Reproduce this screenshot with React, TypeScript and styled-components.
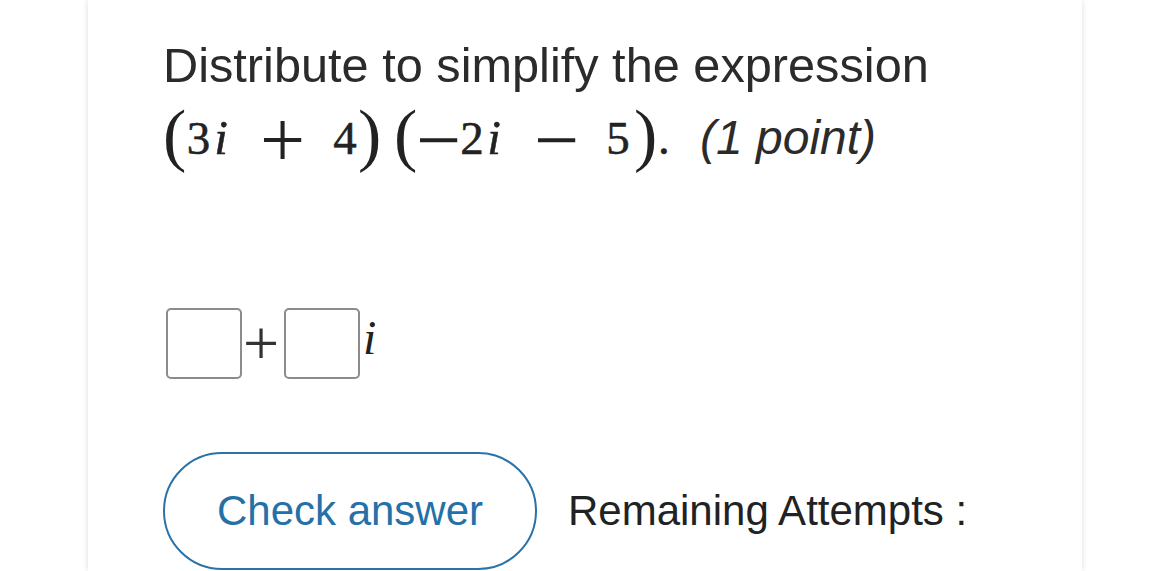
import React from "react";
import styled, { createGlobalStyle, css } from "styled-components";

const GlobalStyle = createGlobalStyle`
  html, body {
    margin: 0;
    padding: 0;
    background: #ffffff;
  }
  body {
    font-family: "Liberation Sans", Arial, sans-serif;
    color: #2b2b2b;
  }
`;

type Kind = "paren" | "num" | "var" | "op";

interface Token {
  text: string;
  kind: Kind;
  width: number;
  gap: number;
}

// (3i + 4)(−2i − 5).
const expression: Token[] = [
  { text: "(", kind: "paren", width: 22, gap: 0 },
  { text: "3", kind: "num", width: 27, gap: 0 },
  { text: "i", kind: "var", width: 18, gap: 0 },
  { text: "+", kind: "op", width: 44, gap: 30 },
  { text: "4", kind: "num", width: 26, gap: 28 },
  { text: ")", kind: "paren", width: 21, gap: 0 },
  { text: "(", kind: "paren", width: 20, gap: 15 },
  { text: "−", kind: "op", width: 40, gap: 2 },
  { text: "2", kind: "num", width: 24, gap: 4 },
  { text: "i", kind: "var", width: 18, gap: 1 },
  { text: "−", kind: "op", width: 40, gap: 31 },
  { text: "5", kind: "num", width: 24, gap: 32 },
  { text: ")", kind: "paren", width: 20, gap: 4 },
  { text: ".", kind: "num", width: 10, gap: 4 },
];

export default function App() {
  return (
    <>
      <GlobalStyle />
      <Page>
        <Card>
          <Prompt>Distribute to simplify the expression</Prompt>
          <MathLine>
            {expression.map((tok, i) => (
              <Glyph key={i} $kind={tok.kind} $width={tok.width} $gap={tok.gap}>
                {tok.text}
              </Glyph>
            ))}
            <Points>(1 point)</Points>
          </MathLine>

          <AnswerRow>
            <Blank aria-label="real part" />
            <Plus>+</Plus>
            <Blank aria-label="imaginary part" />
            <Unit>i</Unit>
          </AnswerRow>

          <Footer>
            <CheckButton>Check answer</CheckButton>
            <Attempts>Remaining Attempts :</Attempts>
          </Footer>
        </Card>
      </Page>
    </>
  );
}

const Page = styled.div`
  display: flex;
  justify-content: center;
  height: 571px;
  overflow: hidden;
`;

const Card = styled.div`
  width: 994px;
  box-sizing: border-box;
  background: #fff;
  box-shadow: 0 0 6px rgba(0, 0, 0, 0.14);
  padding: 37px 0 0 75px;
  display: flex;
  flex-direction: column;
`;

const Prompt = styled.div`
  font-size: 48.7px;
  line-height: 56px;
  color: #2b2b2b;
`;

const MathLine = styled.div`
  margin-top: 7px;
  height: 73px;
  line-height: 73px;
  white-space: nowrap;
  font-family: "Liberation Serif", "Times New Roman", serif;
  color: #222;
`;

const kindStyles: Record<Kind, ReturnType<typeof css>> = {
  paren: css`
    font-size: 70px;
    vertical-align: -4px;
  `,
  num: css`
    font-size: 47px;
    -webkit-text-stroke: 0.5px currentColor;
  `,
  var: css`
    font-size: 49px;
    font-style: italic;
    -webkit-text-stroke: 0.5px currentColor;
  `,
  op: css`
    font-size: 80px;
    vertical-align: -13px;
  `,
};

const Glyph = styled.span<{ $kind: Kind; $width: number; $gap: number }>`
  display: inline-block;
  width: ${(p) => p.$width}px;
  margin-left: ${(p) => p.$gap}px;
  text-align: center;
  line-height: 1;
  ${(p) => kindStyles[p.$kind]}
`;

const Points = styled.span`
  display: inline-block;
  margin-left: 32px;
  font-family: "Liberation Sans", Arial, sans-serif;
  font-style: italic;
  font-size: 48px;
  line-height: 1;
  color: #2b2b2b;
`;

const AnswerRow = styled.div`
  display: flex;
  align-items: center;
  margin-top: 135px;
  margin-left: 3px;
`;

const Blank = styled.div`
  width: 76px;
  height: 71px;
  box-sizing: border-box;
  border: 2.5px solid #8c8c8c;
  border-radius: 5px;
  background: #fff;
`;

const Plus = styled.span`
  font-family: "Liberation Serif", "Times New Roman", serif;
  font-size: 64px;
  line-height: 1;
  color: #333;
  margin: 0 5px 0 1px;
`;

const Unit = styled.span`
  font-family: "Liberation Serif", "Times New Roman", serif;
  font-style: italic;
  font-size: 48px;
  line-height: 1;
  color: #222;
  margin-left: 3px;
  margin-bottom: 12px;
`;

const Footer = styled.div`
  display: flex;
  align-items: center;
  gap: 31px;
  margin-top: 73px;
`;

const CheckButton = styled.button`
  width: 374px;
  height: 118px;
  box-sizing: border-box;
  border: 2.5px solid #2a72a8;
  border-radius: 59px;
  background: #fff;
  color: #2470a8;
  font-family: "Liberation Sans", Arial, sans-serif;
  font-size: 42px;
  padding: 0;
  cursor: pointer;
`;

const Attempts = styled.span`
  font-size: 42px;
  color: #222;
`;
